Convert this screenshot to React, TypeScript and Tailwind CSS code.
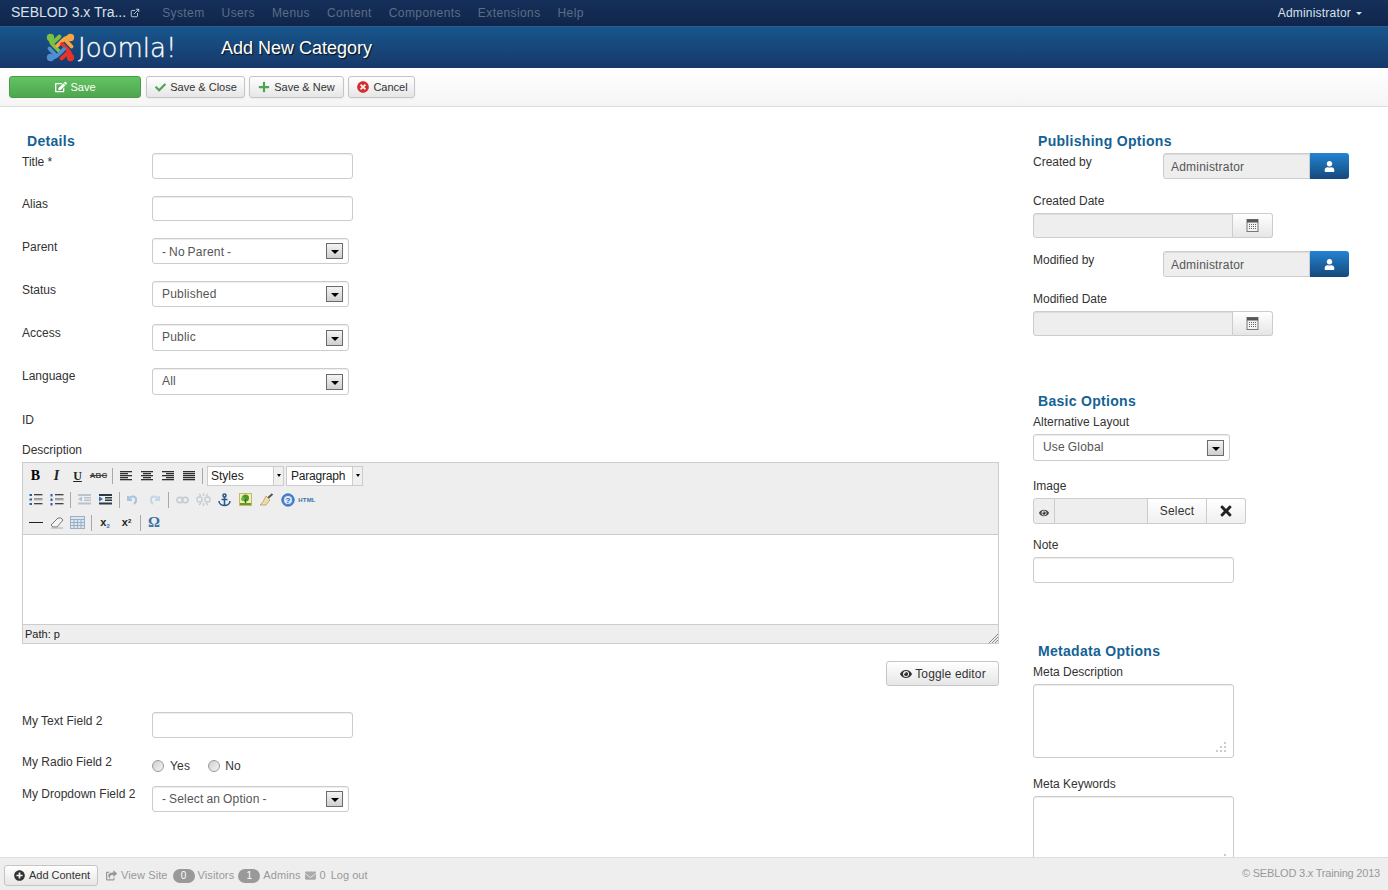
import { FaCheck, FaEdit, FaEnvelope, FaEye, FaPlus, FaPlusCircle, FaShareSquare, FaTimes, FaTimesCircle, FaUser } from "react-icons/fa";
import { ExternalLink } from "lucide-react";
import type { ReactNode } from "react";

const inputCls = "block rounded-[3px] border border-[#cccccc] bg-white shadow-[inset_0_1px_1px_rgba(0,0,0,0.075)]";
const disabledCls = "block rounded-l-[3px] border border-[#cccccc] bg-[#eeeeee] text-[#555555] shadow-[inset_0_1px_1px_rgba(0,0,0,0.075)]";

function Select({ value, w = "w-[197px]", h = "h-[26px]", mt = "", textCls = "" }: { value: string; w?: string; h?: string; mt?: string; textCls?: string }) {
    return (
        <div className={`${inputCls} ${w} ${h} ${mt} flex items-center pl-[9px] pr-[5px] text-[12px] tracking-[0.2px] text-[#555555] [word-spacing:-0.7px]`}>
            <span className={`flex-1 ${textCls}`}>{value}</span>
            <span className="flex h-[16px] w-[17px] items-center justify-center border border-[#6b6b6b] bg-gradient-to-b from-[#f4f4f4] to-[#cfcfcf]">
                <span className="mt-[2px] h-0 w-0 border-x-[4px] border-t-[4px] border-x-transparent border-t-black" />
            </span>
        </div>
    )
}

function Row({ label, labelMt = "", mt = "", children }: { label: ReactNode; labelMt?: string; mt?: string; children: ReactNode }) {
    return (
        <div className={`flex ${mt}`}>
            <label className={`w-[130px] shrink-0 text-[12px] leading-[18px] text-[#333333] ${labelMt}`}>{label}</label>
            {children}
        </div>
    )
}

function Heading({ children, mt = "" }: { children: ReactNode; mt?: string }) {
    return <h3 className={`ml-[5px] text-[14px] font-bold leading-[18px] tracking-[0.3px] text-[#146295] ${mt}`}>{children}</h3>
}

function SideLabel({ children, mt = "" }: { children: ReactNode; mt?: string }) {
    return <div className={`text-[12px] leading-[18px] text-[#333333] ${mt}`}>{children}</div>
}

function ToolBtn({ icon, label, cls = "" }: { icon: ReactNode; label: string; cls?: string }) {
    return (
        <button className={`flex h-[22px] items-center justify-center gap-[4px] rounded-[3px] border border-[#c5c5c5] bg-gradient-to-b from-white to-[#e6e6e6] text-[11px] text-[#333333] shadow-[0_1px_2px_rgba(0,0,0,0.05)] ${cls}`}>
            {icon}
            {label}
        </button>
    )
}

function UserField() {
    return (
        <div className="flex">
            <div className={`${disabledCls} flex h-[26px] w-[147px] items-center pl-[7px] pt-[1px] text-[12px] tracking-[0.2px]`}>Administrator</div>
            <button className="flex h-[26px] w-[39px] items-center justify-center rounded-r-[3px] bg-gradient-to-b from-[#2384d3] to-[#15497c] pr-[1px] text-white">
                <FaUser size={11} />
            </button>
        </div>
    )
}

function CalendarIcon() {
    return (
        <svg width="13" height="13" viewBox="0 0 13 13">
            <rect x="1" y="0.5" width="11" height="12" fill="#f2f2f2" stroke="#777777" />
            <rect x="1" y="0.5" width="11" height="3" fill="#555555" />
            {[5, 7, 9].map((y) => (
                <g key={y} fill="#666666">
                    <rect x="3" y={y} width="1" height="1" />
                    <rect x="5" y={y} width="1" height="1" />
                    <rect x="7" y={y} width="1" height="1" />
                    <rect x="9" y={y} width="1" height="1" />
                </g>
            ))}
        </svg>
    )
}

function DateField({ mt = "" }: { mt?: string }) {
    return (
        <div className={`flex ${mt}`}>
            <div className={`${disabledCls} h-[25px] w-[200px]`} />
            <button className="flex h-[25px] w-[40px] items-center justify-center rounded-r-[3px] border border-l-0 border-[#cccccc] bg-gradient-to-b from-white to-[#e6e6e6]">
                <CalendarIcon />
            </button>
        </div>
    )
}

function Ic({ children }: { children: ReactNode }) {
    return <span className="flex h-[20px] w-[21px] shrink-0 items-center justify-center">{children}</span>
}

function Sep({ w = "w-[7px]" }: { w?: string }) {
    return (
        <span className={`flex h-[20px] shrink-0 items-center justify-center ${w}`}>
            <span className="h-[16px] w-px bg-[#a8a8a8]" />
        </span>
    )
}

function Lines({ rows }: { rows: [number, number][] }) {
    return (
        <svg width="14" height="12" viewBox="0 0 14 12">
            {rows.map(([x, w], i) => (
                <g key={i}>
                    <rect x={x} y={i * 2 + 1} width={w} height="1" fill="#2f2f2f" />
                    <rect x={x} y={i * 2 + 2} width={w} height="1" fill="#b5b5b5" />
                </g>
            ))}
        </svg>
    )
}

function ListIcon({ numbered }: { numbered?: boolean }) {
    return (
        <svg width="14" height="13" viewBox="0 0 14 13">
            {[1, 5.5, 10].map((y) => (
                <g key={y}>
                    <rect x="0.5" y={y} width={numbered ? 2 : 2.5} height={numbered ? 2.5 : 2} fill="#2f5f98" />
                    <rect x="5" y={y} width="8.5" height="1" fill="#444444" />
                    <rect x="5" y={y + 1} width="8.5" height="1" fill="#b5b5b5" />
                </g>
            ))}
        </svg>
    )
}

function Indent({ faded, out }: { faded?: boolean; out?: boolean }) {
    const c = faded ? "#b9c4cc" : "#2c3a48"
    return (
        <svg width="15" height="13" viewBox="0 0 15 13" fill={c}>
            <rect x="1" y="1" width="13" height="2" />
            <rect x="7" y="4" width="7" height="1.5" />
            <rect x="7" y="6.5" width="7" height="1.5" />
            <rect x="1" y="9.5" width="13" height="2" />
            <path d={out ? "M1 6 L5 3.5 V8.5 Z" : "M5 6 L1 3.5 V8.5 Z"} fill={faded ? "#a8c4dc" : "#2d6fb0"} />
        </svg>
    )
}

function Joomla() {
    const hook = "M4.5 4.5 C4 9 6 11 9 14 L13 18 M6.5 10 L13.5 3.5"
    return (
        <div className="flex items-center">
            <svg width="29" height="29" viewBox="0 0 29 29" fill="none" strokeWidth="3.8" strokeLinecap="round" strokeLinejoin="round">
                <g stroke="#7ac143"><path d={hook} /><circle cx="4.5" cy="4.5" r="1.8" fill="#7ac143" /></g>
                <g stroke="#f9a541" transform="rotate(90 14.5 14.5)"><path d={hook} /><circle cx="4.5" cy="4.5" r="1.8" fill="#f9a541" /></g>
                <g stroke="#e8332a" transform="rotate(180 14.5 14.5)"><path d={hook} /><circle cx="4.5" cy="4.5" r="1.8" fill="#e8332a" /></g>
                <g stroke="#4f8fcf" transform="rotate(270 14.5 14.5)"><path d={hook} /><circle cx="4.5" cy="4.5" r="1.8" fill="#4f8fcf" /></g>
            </svg>
            <span className="ml-[3px] font-['DejaVu_Sans','Lato',sans-serif] text-[26px] font-extralight leading-none text-white [-webkit-text-stroke:0.3px_white]">Joomla!</span>
        </div>
    )
}

function Editor() {
    return (
        <div className="mt-[3px] h-[182px] w-[977px] border border-[#cccccc]">
            <div className="h-[72px] border-b border-[#cccccc] bg-[#eeeeee] pl-[2px] pt-[1px]">
                <div className="mb-[1px] flex h-[23px] items-center">
                    <Ic><span className="font-['Liberation_Serif',serif] text-[14px] font-bold leading-none text-black">B</span></Ic>
                    <Ic><span className="font-['Liberation_Serif',serif] text-[14px] font-bold italic leading-none text-[#222222]">I</span></Ic>
                    <Ic><span className="font-['Liberation_Serif',serif] text-[12px] font-bold leading-none text-[#222222] underline">U</span></Ic>
                    <Ic><span className="text-[8px] font-bold leading-none text-[#444444] line-through">ABC</span></Ic>
                    <Sep w="w-[6px]" />
                    <Ic><Lines rows={[[1, 12], [1, 8], [1, 12], [1, 8], [1, 12]]} /></Ic>
                    <Ic><Lines rows={[[1, 12], [3, 8], [1, 12], [3, 8], [1, 12]]} /></Ic>
                    <Ic><Lines rows={[[1, 12], [5, 8], [1, 12], [5, 8], [1, 12]]} /></Ic>
                    <Ic><Lines rows={[[1, 12], [1, 12], [1, 12], [1, 12], [1, 12]]} /></Ic>
                    <Sep w="w-[6px]" />
                    <div className="ml-[2px] flex h-[20px] w-[77px] border border-[#cccccc]">
                        <span className="flex-1 bg-white pl-[3px] text-[12px] leading-[18px] text-[#222222]">Styles</span>
                        <span className="flex w-[10px] items-center justify-center border-l border-[#cccccc] bg-[#f0f0ee]"><span className="h-0 w-0 border-x-[2.5px] border-t-[3px] border-x-transparent border-t-black" /></span>
                    </div>
                    <div className="ml-[2px] flex h-[20px] w-[77px] border border-[#cccccc]">
                        <span className="flex-1 bg-white pl-[4px] text-[12px] leading-[18px] tracking-[-0.2px] text-[#222222]">Paragraph</span>
                        <span className="flex w-[10px] items-center justify-center border-l border-[#cccccc] bg-[#f0f0ee]"><span className="h-0 w-0 border-x-[2.5px] border-t-[3px] border-x-transparent border-t-black" /></span>
                    </div>
                </div>
                <div className="flex h-[23px] items-center">
                    <Ic><ListIcon /></Ic>
                    <Ic><ListIcon numbered /></Ic>
                    <Sep />
                    <Ic><Indent faded out /></Ic>
                    <Ic><Indent /></Ic>
                    <Sep />
                    <Ic>
                        <svg width="14" height="13" viewBox="0 0 14 13" fill="none" className="-ml-[3px]"><path d="M3 3 V7 H7 M3 7 C5 3 10 2 11 6 C11.5 8 10.5 10 9 11" stroke="#a9c4de" strokeWidth="2" /></svg>
                    </Ic>
                    <Ic>
                        <svg width="14" height="13" viewBox="0 0 14 13" fill="none"><path d="M11 3 V7 H7 M11 7 C9 3 4 2 3 6 C2.5 8 3.5 10 5 11" stroke="#c5d6e6" strokeWidth="2" /></svg>
                    </Ic>
                    <Sep />
                    <Ic>
                        <svg width="13" height="8" viewBox="0 0 15 9" fill="none" stroke="#c4ccd4" strokeWidth="1.8"><rect x="1" y="1.5" width="7" height="6" rx="3" /><rect x="7" y="1.5" width="7" height="6" rx="3" /></svg>
                    </Ic>
                    <Ic>
                        <svg width="15" height="15" viewBox="0 0 15 15" fill="none" stroke="#c4ccd4" strokeWidth="1.4"><rect x="1" y="5" width="5" height="5" rx="2" /><rect x="9" y="5" width="5" height="5" rx="2" /><path d="M7.5 1 V4 M7.5 11 V14 M3 2 L5 4 M12 2 L10 4 M3 13 L5 11 M12 13 L10 11" /></svg>
                    </Ic>
                    <Ic>
                        <svg width="13" height="14" viewBox="0 0 13 14" fill="none" stroke="#2a5a8c" strokeWidth="1.6"><circle cx="6.5" cy="2.5" r="1.5" /><path d="M6.5 4 V12.5 M3.5 6.5 H9.5 M1 8 C1 11 4 12.5 6.5 12.5 C9 12.5 12 11 12 8" /></svg>
                    </Ic>
                    <Ic>
                        <svg width="13" height="13" viewBox="0 0 13 13"><rect x="0.5" y="0.5" width="12" height="12" fill="#f4efb0" stroke="#c8b860" /><circle cx="6.5" cy="5" r="3.5" fill="#3f9a2f" /><circle cx="4" cy="6" r="2" fill="#66b83f" /><rect x="5.8" y="6" width="1.4" height="4" fill="#7a4a20" /><rect x="1" y="10" width="11" height="2" fill="#5a9e3a" /></svg>
                    </Ic>
                    <Ic>
                        <svg width="15" height="14" viewBox="0 0 15 14"><path d="M9 5 L13.5 1" stroke="#555555" strokeWidth="2" /><path d="M7 3 L11 7 L7 12 L1 12 C4 10 5 6 7 3 Z" fill="#eadcae" stroke="#a88a30" strokeWidth="0.6" /></svg>
                    </Ic>
                    <Ic>
                        <svg width="14" height="14" viewBox="0 0 14 14"><circle cx="7" cy="7" r="6.2" fill="#4a86d8" stroke="#2a5aa8" strokeWidth="0.8" /><circle cx="7" cy="7" r="4" fill="#dbe8f8" /><text x="7" y="10" textAnchor="middle" fontSize="8" fontWeight="bold" fill="#2a5aa8" fontFamily="Liberation Sans">?</text></svg>
                    </Ic>
                    <Ic><span className="-ml-[3px] text-[6px] font-bold leading-none tracking-[0.2px] text-[#3a6ea5]">HTML</span></Ic>
                </div>
                <div className="flex h-[23px] items-center">
                    <Ic><span className="h-px w-[14px] bg-[#222222]" /></Ic>
                    <Ic>
                        <svg width="14" height="12" viewBox="0 0 14 12"><path d="M1 8 L8 1 H11 L13 3 L7 10 H3 Z" fill="#f4f4f4" stroke="#777777" /><rect x="1" y="10.5" width="12" height="1" fill="#9ab0c4" /></svg>
                    </Ic>
                    <Ic>
                        <svg width="15" height="13" viewBox="0 0 15 13" fill="#dbe6f2" stroke="#9ab0c6" strokeWidth="1"><rect x="0.5" y="0.5" width="14" height="12" /><path d="M0.5 3.5 H14.5 M0.5 6.5 H14.5 M0.5 9.5 H14.5 M4 3.5 V12.5 M7.5 3.5 V12.5 M11 3.5 V12.5" fill="none" /></svg>
                    </Ic>
                    <Sep />
                    <Ic><span className="-ml-[1px] text-[11px] font-bold leading-none text-[#222222]">x<sub className="text-[6px] text-[#3a6ea5]">2</sub></span></Ic>
                    <Ic><span className="text-[11px] font-bold leading-none text-[#222222]">x<sup className="text-[6px]">2</sup></span></Ic>
                    <Sep />
                    <Ic><span className="-ml-[1px] font-['Liberation_Serif',serif] text-[15px] font-bold leading-none text-[#3a6ea5]">Ω</span></Ic>
                </div>
            </div>
            <div className="h-[89px] bg-white" />
            <div className="relative h-[19px] border-t border-[#cccccc] bg-[#eeeeee] pl-[2px] text-[11px] leading-[18px] text-[#222222]">
                Path: p
                <svg className="absolute bottom-0 right-0" width="10" height="10" viewBox="0 0 10 10" stroke="#888888"><path d="M10 1 L1 10 M10 4 L4 10 M10 7 L7 10" /></svg>
            </div>
        </div>
    )
}

function Area({ mt = "", h }: { mt?: string; h: string }) {
    return (
        <div className={`relative ${mt}`}>
            <textarea readOnly className={`${inputCls} ${h} w-[201px] resize-none`} />
            <svg className="absolute left-[182px] top-[57px]" width="12" height="12" viewBox="0 0 12 12" fill="#cccccc">
                <rect x="9" y="1" width="2" height="2" />
                <rect x="5" y="5" width="2" height="2" />
                <rect x="9" y="5" width="2" height="2" />
                <rect x="1" y="9" width="2" height="2" />
                <rect x="5" y="9" width="2" height="2" />
                <rect x="9" y="9" width="2" height="2" />
            </svg>
        </div>
    )
}

export default function App() {
    const menu = ["System", "Users", "Menus", "Content", "Components", "Extensions", "Help"]

    return (
        <div className="flex h-[890px] w-[1388px] flex-col overflow-hidden bg-white font-['Liberation_Sans',Arial,sans-serif]">
            {/* top menu */}
            <div className="flex h-[27px] shrink-0 items-center border-b border-[#2b5a8c] bg-gradient-to-b from-[#15305a] to-[#10254b] pb-[1px] pr-[26px]">
                <span className="ml-[11px] text-[14px] text-[#d9e2ec]">SEBLOD 3.x Tra...</span>
                <ExternalLink size={10} strokeWidth={2} className="ml-[4px] text-[#d9e2ec]" />
                <nav className="ml-[22px] flex gap-[17px] text-[12px] tracking-[0.4px] text-[#5d6d86]">
                    {menu.map((m) => <span key={m}>{m}</span>)}
                </nav>
                <span className="ml-auto flex items-center gap-[5px] text-[12px] tracking-[0.2px] text-[#d9e2ec]">
                    Administrator
                    <span className="mt-[1px] h-0 w-0 border-x-[3px] border-t-[3px] border-x-transparent border-t-[#d9e2ec]" />
                </span>
            </div>

            {/* title bar */}
            <div className="flex h-[41px] shrink-0 items-center bg-gradient-to-b from-[#17568c] to-[#17386a] pl-[46px]">
                <div className="w-[175px]"><Joomla /></div>
                <h1 className="text-[18px] leading-none text-white [text-shadow:1px_1px_1px_rgba(0,0,0,0.8)]">Add New Category</h1>
            </div>

            {/* toolbar */}
            <div className="flex h-[39px] shrink-0 items-start gap-[4px] border-b border-[#dddddd] bg-gradient-to-b from-white to-[#f5f5f5] pl-[9px] pt-[8px]">
                <button className="mr-[1px] flex h-[22px] w-[132px] items-center justify-center gap-[3px] rounded-[3px] border border-[#4a9a4a] bg-gradient-to-b from-[#62c462] to-[#4fa64f] pl-[1px] text-[11px] text-white">
                    <FaEdit size={12} /> Save
                </button>
                <ToolBtn cls="w-[99px] pl-[1px]" icon={<FaCheck size={11} className="text-[#51a351]" />} label="Save & Close" />
                <ToolBtn cls="w-[95px]" icon={<FaPlus size={12} className="text-[#51a351]" />} label="Save & New" />
                <ToolBtn cls="w-[67px] pl-[2px]" icon={<FaTimesCircle size={12} className="text-[#d62c2c]" />} label="Cancel" />
            </div>

            {/* form */}
            <div className="flex min-h-0 flex-1 overflow-hidden pl-[22px] pt-[25px]">
                <div className="w-[977px] shrink-0">
                    <Heading>Details</Heading>
                    <Row label={<>Title <span>*</span></>} mt="mt-[3px]">
                        <input className={`${inputCls} h-[26px] w-[201px]`} />
                    </Row>
                    <Row label="Alias" mt="mt-[17px]" labelMt="-mt-[1px]">
                        <input className={`${inputCls} h-[25px] w-[201px]`} />
                    </Row>
                    <Row label="Parent" mt="mt-[17px]"><Select value="- No Parent -" textCls="mt-[1px]" /></Row>
                    <Row label="Status" mt="mt-[17px]"><Select value="Published" /></Row>
                    <Row label="Access" mt="mt-[17px]"><Select value="Public" h="h-[27px]" textCls="-mt-[1px]" /></Row>
                    <Row label="Language" mt="mt-[17px]" labelMt="-mt-[1px]"><Select value="All" h="h-[27px]" textCls="-mt-[1px]" /></Row>
                    <SideLabel mt="mt-[16px]">ID</SideLabel>
                    <SideLabel mt="mt-[12px]">Description</SideLabel>
                    <Editor />
                    <div className="mt-[17px] flex justify-end">
                        <button className="flex h-[25px] w-[113px] items-center justify-center gap-[3px] rounded-[3px] border border-[#c5c5c5] bg-gradient-to-b from-white to-[#e6e6e6] pl-[1px] text-[12px] tracking-[0.15px] text-[#333333]">
                            <FaEye size={12} /> Toggle editor
                        </button>
                    </div>
                    <Row label="My Text Field 2" mt="mt-[26px]">
                        <input className={`${inputCls} h-[26px] w-[201px]`} />
                    </Row>
                    <Row label="My Radio Field 2" mt="mt-[15px]">
                        <div className="mt-[4px] flex items-center text-[12px] tracking-[0.2px] text-[#333333]">
                            <span className="h-[12px] w-[12px] rounded-full border border-[#9a9a9a] bg-gradient-to-br from-[#d0d0d0] to-[#f4f4f4]" />
                            <span className="ml-[6px]">Yes</span>
                            <span className="ml-[18px] h-[12px] w-[12px] rounded-full border border-[#9a9a9a] bg-gradient-to-br from-[#d0d0d0] to-[#f4f4f4]" />
                            <span className="ml-[5px]">No</span>
                        </div>
                    </Row>
                    <Row label="My Dropdown Field 2" mt="mt-[11px]" labelMt="-mt-[1px]"><Select value="- Select an Option -" /></Row>
                </div>

                <div className="ml-[34px] w-[320px] shrink-0">
                    <Heading>Publishing Options</Heading>
                    <Row label="Created by" mt="mt-[3px]"><UserField /></Row>
                    <SideLabel mt="mt-[13px]">Created Date</SideLabel>
                    <DateField mt="mt-[3px]" />
                    <Row label="Modified by" mt="mt-[13px]"><UserField /></Row>
                    <SideLabel mt="mt-[13px]">Modified Date</SideLabel>
                    <DateField mt="mt-[3px]" />

                    <Heading mt="mt-[56px]">Basic Options</Heading>
                    <SideLabel mt="mt-[3px]">Alternative Layout</SideLabel>
                    <Select value="Use Global" h="h-[27px]" mt="mt-[3px]" textCls="-mt-[1px]" />
                    <SideLabel mt="mt-[16px]">Image</SideLabel>
                    <div className="mt-[3px] flex h-[26px] w-[213px] text-[12px] text-[#333333]">
                        <span className="flex w-[22px] items-end justify-center rounded-l-[3px] border border-[#cccccc] bg-[#eeeeee] pb-[5px] text-[#444444]"><FaEye size={10} /></span>
                        <span className="w-[92px] border-y border-[#cccccc] bg-[#eeeeee]" />
                        <span className="flex w-[60px] items-center justify-center border border-[#cccccc] bg-gradient-to-b from-white to-[#f0f0f0] tracking-[0.2px]">Select</span>
                        <span className="flex w-[39px] items-center justify-center rounded-r-[3px] border border-l-0 border-[#cccccc] bg-gradient-to-b from-white to-[#f0f0f0] text-[#222222]"><FaTimes size={16} /></span>
                    </div>
                    <SideLabel mt="mt-[12px]">Note</SideLabel>
                    <input className={`${inputCls} mt-[3px] h-[26px] w-[201px]`} />

                    <Heading mt="mt-[59px]">Metadata Options</Heading>
                    <SideLabel mt="mt-[3px]">Meta Description</SideLabel>
                    <Area mt="mt-[3px]" h="h-[74px]" />
                    <SideLabel mt="mt-[17px]">Meta Keywords</SideLabel>
                    <Area mt="mt-[3px]" h="h-[74px]" />
                </div>
            </div>

            {/* status bar */}
            <div className="flex h-[33px] shrink-0 items-center border-t border-[#dddddd] bg-[#eeeeee] pl-[4px] pr-[8px] pt-[3px] text-[11px] tracking-[0.1px] text-[#999999]">
                <button className="flex h-[21px] w-[94px] items-center justify-center gap-[4px] rounded-[3px] border border-[#c5c5c5] bg-gradient-to-b from-white to-[#e6e6e6] pl-[2px] text-[11px] tracking-normal text-[#333333]">
                    <FaPlusCircle size={11} /> Add Content
                </button>
                <span className="ml-[8px] flex items-center gap-[4px]"><FaShareSquare size={11} /> View Site</span>
                <span className="ml-[5px] w-[22px] rounded-[9px] bg-[#999999] text-center text-[10px] leading-[14px] text-white">0</span>
                <span className="ml-[3px]">Visitors</span>
                <span className="ml-[4px] w-[22px] rounded-[9px] bg-[#999999] text-center text-[10px] leading-[14px] text-white">1</span>
                <span className="ml-[3px]">Admins</span>
                <FaEnvelope size={11} className="ml-[4px] text-[#aaaaaa]" />
                <span className="ml-[4px]">0</span>
                <span className="ml-[5px] tracking-normal">Log out</span>
                <span className="-mt-[4px] ml-auto tracking-[-0.2px]">© SEBLOD 3.x Training 2013</span>
            </div>
        </div>
    )
}
